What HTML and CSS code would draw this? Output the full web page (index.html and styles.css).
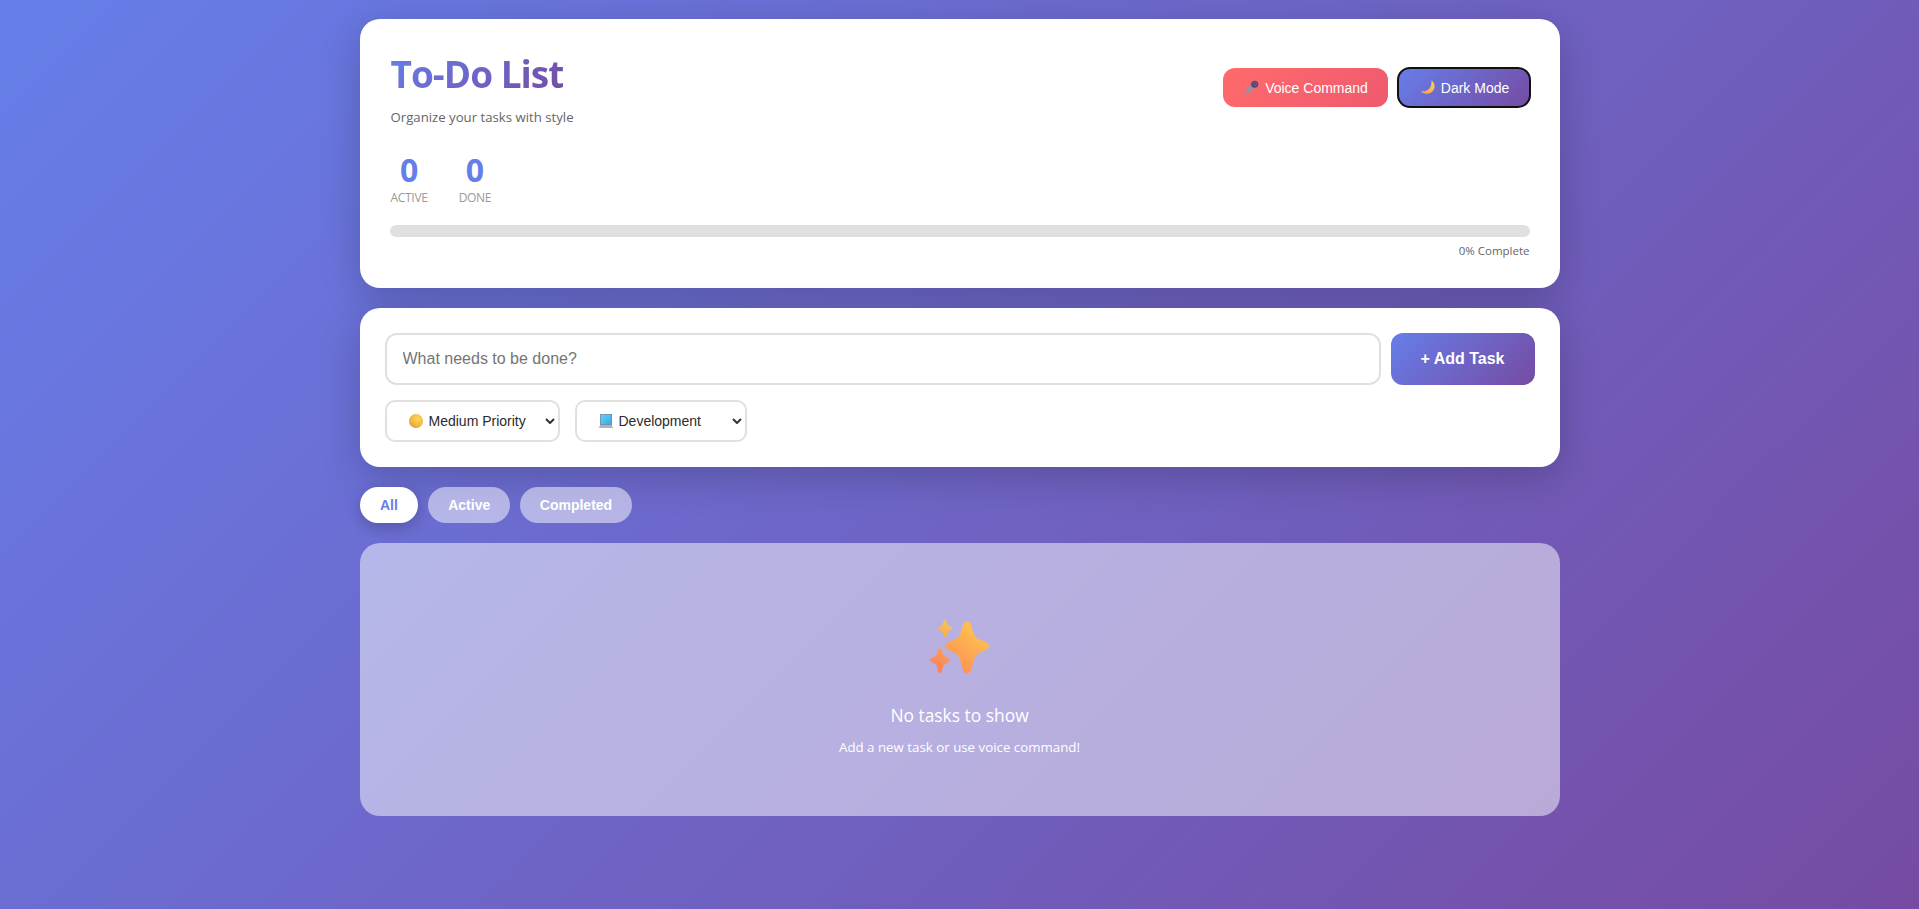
FILE: index.html
```html
<!DOCTYPE html>
<html lang="en">
<head>
  <meta charset="UTF-8" />
  <title>To-Do List</title>
  <meta name="viewport" content="width=device-width, initial-scale=1.0" />
  <link rel="stylesheet" href="styles.css">
</head>
<body>
  <div class="container">
    <header class="card header-card">
      <div class="header-top">
        <div class="header-text">
          <h1 class="title">To-Do List</h1>
          <p class="subtitle">Organize your tasks with style</p>
        </div>
        <div class="header-actions">
          <button class="btn btn-voice">
            <svg class="btn-icon" viewBox="0 0 16 16">
              <path d="M7.600 4.400 11.800 8.400 2.800 15.200 .8 13.200z" fill="#94969f"/>
              <circle cx="11.400" cy="4.500" r="3.800" fill="#57466f"/>
              <path d="M9 3l4.200 4M10.400 1.400l4 4" stroke="#7d6c96" stroke-width=".8"/>
            </svg>
            Voice Command
          </button>
          <button class="btn btn-theme">
            <svg class="btn-icon" viewBox="0 0 16 16">
              <defs>
                <linearGradient id="moonFill" x1="1" y1="0" x2="0" y2="1">
                  <stop offset="0" stop-color="#ffd15a"/>
                  <stop offset="1" stop-color="#fb9d4a"/>
                </linearGradient>
              </defs>
              <path d="M12 .5C15 2 16.500 6 15 9.500 13.500 13 9.500 15.500 5.500 14.500 3.500 14 2 13.500 .8 12 4 12.500 8 11.500 10 9 12 6.500 12.700 3.500 12 .5Z" fill="url(#moonFill)"/>
            </svg>
            Dark Mode
          </button>
        </div>
      </div>
      <div class="stats">
        <div class="stat">
          <div class="stat-number">0</div>
          <div class="stat-label">Active</div>
        </div>
        <div class="stat">
          <div class="stat-number">0</div>
          <div class="stat-label">Done</div>
        </div>
      </div>
      <div class="progress-bar"></div>
      <div class="progress-text">0% Complete</div>
    </header>

    <section class="card input-card">
      <div class="input-row">
        <input class="task-input" type="text" placeholder="What needs to be done?" />
        <button class="add-btn">+ Add Task</button>
      </div>
      <div class="select-row">
        <div class="select select-priority">
          <svg class="option-icon" viewBox="0 0 16 16">
            <defs>
              <radialGradient id="dotFill" cx=".62" cy=".35" r=".75">
                <stop offset="0" stop-color="#ffd75e"/>
                <stop offset=".7" stop-color="#eeb33f"/>
                <stop offset="1" stop-color="#cf8a5a"/>
              </radialGradient>
            </defs>
            <circle cx="8" cy="8" r="8" fill="url(#dotFill)"/>
          </svg>
          <span>Medium Priority</span>
          <svg class="chevron" viewBox="0 0 10 6"><path d="M1 1l4 4 4-4" fill="none" stroke="#333" stroke-width="2"/></svg>
        </div>
        <div class="select select-category">
          <svg class="option-icon" viewBox="0 0 14 14">
            <defs>
              <linearGradient id="screenFill" x1="0" y1="0" x2="1" y2="1">
                <stop offset="0" stop-color="#62d4f7"/>
                <stop offset="1" stop-color="#35a9e2"/>
              </linearGradient>
            </defs>
            <rect x="1" y="0" width="12" height="11" fill="#7f8799"/>
            <rect x="1.700" y=".7" width="10.600" height="9.600" fill="url(#screenFill)"/>
            <path d="M1 11h12l1 3H0z" fill="#aeb2bf"/>
          </svg>
          <span>Development</span>
          <svg class="chevron" viewBox="0 0 10 6"><path d="M1 1l4 4 4-4" fill="none" stroke="#333" stroke-width="2"/></svg>
        </div>
      </div>
    </section>

    <nav class="filters">
      <button class="filter-btn active">All</button>
      <button class="filter-btn">Active</button>
      <button class="filter-btn">Completed</button>
    </nav>

    <section class="empty-state">
      <svg class="empty-icon" viewBox="0 0 60 60">
        <defs>
          <linearGradient id="sparkBig" x1=".8" y1="0" x2=".2" y2="1">
            <stop offset="0" stop-color="#fdc94f"/>
            <stop offset="1" stop-color="#fe8d55"/>
          </linearGradient>
          <linearGradient id="sparkTop" x1=".8" y1="0" x2=".2" y2="1">
            <stop offset="0" stop-color="#fbc851"/>
            <stop offset="1" stop-color="#f7a653"/>
          </linearGradient>
          <linearGradient id="sparkLow" x1=".8" y1="0" x2=".2" y2="1">
            <stop offset="0" stop-color="#fda054"/>
            <stop offset="1" stop-color="#fe7c5c"/>
          </linearGradient>
          <path id="spark" d="M37 4C39.500 4 41 7 42 11 43.500 17 45 20 47 21 49 22.500 52 23.500 55 24.800 58 26 59 27.500 59 29 59 30.500 58 32 55 33.200 52 34.500 49 36 47 37.500 45 39.500 43.500 43 42 50 41 54 39.500 56.500 37 56.500 34.500 56.500 33 54 32 50 30.500 43 29 39.500 27 37.500 25 36 22 34.500 19 33.200 16 32 15 30.500 15 29 15 27.500 16 26 19 24.800 22 23.500 25 22.500 27 21 29 20 30.500 17 32 11 33 7 34.500 4 37 4Z"/>
        </defs>
        <use href="#spark" fill="url(#sparkBig)"/>
        <use href="#spark" fill="url(#sparkTop)" transform="translate(15 11.300) scale(.33 .34) translate(-37 -29)"/>
        <use href="#spark" fill="url(#sparkLow)" transform="translate(10 43) scale(.46 .48) translate(-37 -29)"/>
      </svg>
      <h3 class="empty-title">No tasks to show</h3>
      <p class="empty-text">Add a new task or use voice command!</p>
    </section>
  </div>
</body>
</html>
```

FILE: styles.css
```css
* {
  margin: 0;
  padding: 0;
  box-sizing: border-box;
}

html,
body {
  height: 100%;
}

body {
  font-family: "Open Sans", "Noto Sans", sans-serif;
  background: linear-gradient(135deg, #667eea 0%, #764ba2 100%);
  padding-top: 19px;
  overflow: hidden;
}

.container {
  width: 1200px;
  margin: 0 auto;
  display: flex;
  flex-direction: column;
  gap: 20px;
}

.card {
  background: #fff;
  border-radius: 20px;
  box-shadow: 0 10px 40px rgba(0, 0, 0, 0.2);
}

/* header */
.header-card {
  height: 269px;
  padding: 30px;
}

.header-top {
  display: flex;
  justify-content: space-between;
  align-items: center;
  height: 78px;
}

.header-text {
  padding-left: 1px;
}

.title {
  font-size: 37px;
  font-weight: 700;
  line-height: 48px;
  letter-spacing: -1px;
  background: linear-gradient(135deg, #667eea, #764ba2);
  -webkit-background-clip: text;
  background-clip: text;
  color: transparent;
  width: fit-content;
}

.subtitle {
  margin-top: 9px;
  font-size: 13.2px;
  line-height: 20px;
  color: #666;
}

.header-actions {
  display: flex;
  gap: 10px;
  margin-top: -1px;
}

.btn {
  display: flex;
  align-items: center;
  justify-content: center;
  gap: 6px;
  height: 39px;
  padding-left: 2px;
  border: none;
  border-radius: 12px;
  color: #fff;
  font-family: "Liberation Sans", Arial, sans-serif;
  font-size: 14px;
}

.btn-icon {
  width: 15px;
  height: 15px;
}

.btn-voice {
  width: 165px;
  background: linear-gradient(135deg, #ff6b6b, #ee5a6f);
}

.btn-theme {
  width: 132px;
  background: linear-gradient(135deg, #667eea, #764ba2);
  outline: 2px solid #101010;
  outline-offset: -1px;
}

.stats {
  display: flex;
  gap: 31px;
  margin-top: 24px;
  margin-left: 1px;
}

.stat {
  text-align: center;
}

.stat-number {
  font-size: 32px;
  font-weight: 700;
  line-height: 38px;
  color: #667eea;
}

.stat-label {
  margin-top: 1px;
  font-size: 12px;
  line-height: 16px;
  color: #999;
  text-transform: uppercase;
  letter-spacing: -0.3px;
}

.progress-bar {
  height: 12px;
  margin-top: 19px;
  background: #e0e0e0;
  border-radius: 10px;
}

.progress-text {
  margin-top: 6px;
  font-size: 11.5px;
  line-height: 16px;
  color: #666;
  text-align: right;
}

/* add task */
.input-card {
  padding: 25px;
}

.input-row {
  display: flex;
  gap: 10px;
}

.task-input {
  flex: 1;
  height: 52px;
  padding: 0 16px;
  border: 2px solid #e0e0e0;
  border-radius: 12px;
  font-family: "Liberation Sans", Arial, sans-serif;
  font-size: 16px;
  outline: none;
}

.task-input::placeholder {
  color: #757575;
}

.add-btn {
  width: 144px;
  height: 52px;
  border: none;
  border-radius: 12px;
  background: linear-gradient(135deg, #667eea, #764ba2);
  color: #fff;
  font-family: "Liberation Sans", Arial, sans-serif;
  font-size: 16px;
  font-weight: 700;
}

.select-row {
  display: flex;
  gap: 15px;
  margin-top: 15px;
}

.select {
  display: flex;
  align-items: center;
  height: 42px;
  padding-left: 22px;
  border: 2px solid #e0e0e0;
  border-radius: 10px;
  background: #fff;
  color: #2b2b2b;
  font-family: "Liberation Sans", Arial, sans-serif;
  font-size: 14px;
}

.select-priority {
  width: 175px;
}

.select-category {
  width: 172px;
}

.option-icon {
  width: 14px;
  height: 14px;
  margin-right: 6px;
}

.chevron {
  width: 10px;
  height: 6px;
  margin-left: auto;
  margin-right: 3px;
}

/* filters */
.filters {
  display: flex;
  gap: 10px;
}

.filter-btn {
  height: 36px;
  padding: 0 19.8px;
  border: none;
  border-radius: 20px;
  background: rgba(255, 255, 255, 0.5);
  color: #fff;
  font-family: "Liberation Sans", Arial, sans-serif;
  font-size: 14px;
  font-weight: 700;
}

.filter-btn.active {
  padding: 0 20.5px;
  background: #fff;
  color: #667eea;
  box-shadow: 0 5px 15px rgba(0, 0, 0, 0.2);
}

/* empty list */
.empty-state {
  height: 273px;
  padding-top: 74px;
  border-radius: 20px;
  background: rgba(255, 255, 255, 0.5);
  color: #fff;
  text-align: center;
}

.empty-icon {
  display: block;
  width: 60px;
  height: 60px;
  margin: 0 auto;
}

.empty-title {
  margin-top: 25px;
  font-size: 17.4px;
  font-weight: 400;
  line-height: 26px;
}

.empty-text {
  margin-top: 9px;
  font-size: 13.3px;
  line-height: 20px;
}
```
